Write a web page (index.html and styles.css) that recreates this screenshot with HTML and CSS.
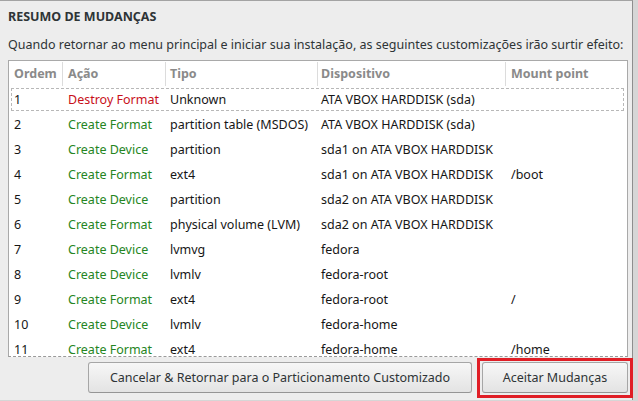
FILE: index.html
```html
<!DOCTYPE html>
<html lang="pt">
<head>
<meta charset="utf-8">
<link rel="stylesheet" href="styles.css">
</head>
<body>
<div class="dialog">
  <div class="title">RESUMO DE MUDANÇAS</div>
  <div class="subtitle">Quando retornar ao menu principal e iniciar sua instalação, as seguintes customizações irão surtir efeito:</div>
  <div class="table">
    <div class="row head">
      <div class="c c1">Ordem</div>
      <div class="c c2">Ação</div>
      <div class="c c3">Tipo</div>
      <div class="c c4">Dispositivo</div>
      <div class="c c5">Mount point</div>
    </div>
    <div class="body">
      <div class="row focus">
        <div class="c c1">1</div><div class="c c2 red">Destroy Format</div><div class="c c3">Unknown</div><div class="c c4">ATA VBOX HARDDISK (sda)</div><div class="c c5"></div>
      </div>
      <div class="row">
        <div class="c c1">2</div><div class="c c2 green">Create Format</div><div class="c c3">partition table (MSDOS)</div><div class="c c4">ATA VBOX HARDDISK (sda)</div><div class="c c5"></div>
      </div>
      <div class="row">
        <div class="c c1">3</div><div class="c c2 green">Create Device</div><div class="c c3">partition</div><div class="c c4">sda1 on ATA VBOX HARDDISK</div><div class="c c5"></div>
      </div>
      <div class="row">
        <div class="c c1">4</div><div class="c c2 green">Create Format</div><div class="c c3">ext4</div><div class="c c4">sda1 on ATA VBOX HARDDISK</div><div class="c c5">/boot</div>
      </div>
      <div class="row">
        <div class="c c1">5</div><div class="c c2 green">Create Device</div><div class="c c3">partition</div><div class="c c4">sda2 on ATA VBOX HARDDISK</div><div class="c c5"></div>
      </div>
      <div class="row">
        <div class="c c1">6</div><div class="c c2 green">Create Format</div><div class="c c3">physical volume (LVM)</div><div class="c c4">sda2 on ATA VBOX HARDDISK</div><div class="c c5"></div>
      </div>
      <div class="row">
        <div class="c c1">7</div><div class="c c2 green">Create Device</div><div class="c c3">lvmvg</div><div class="c c4">fedora</div><div class="c c5"></div>
      </div>
      <div class="row">
        <div class="c c1">8</div><div class="c c2 green">Create Device</div><div class="c c3">lvmlv</div><div class="c c4">fedora-root</div><div class="c c5"></div>
      </div>
      <div class="row">
        <div class="c c1">9</div><div class="c c2 green">Create Format</div><div class="c c3">ext4</div><div class="c c4">fedora-root</div><div class="c c5">/</div>
      </div>
      <div class="row">
        <div class="c c1">10</div><div class="c c2 green">Create Device</div><div class="c c3">lvmlv</div><div class="c c4">fedora-home</div><div class="c c5"></div>
      </div>
      <div class="row">
        <div class="c c1">11</div><div class="c c2 green">Create Format</div><div class="c c3">ext4</div><div class="c c4">fedora-home</div><div class="c c5">/home</div>
      </div>
    </div>
  </div>
  <div class="buttons">
    <button class="btn cancel">Cancelar &amp; Retornar para o Particionamento Customizado</button>
    <div class="highlight"><button class="btn accept">Aceitar Mudanças</button></div>
  </div>
</div>
</body>
</html>
```
FILE: styles.css
```css
html, body {
  margin: 0;
  padding: 0;
  height: 100%;
}
body {
  background: #d6d6d6;
  font-family: "Noto Sans", "DejaVu Sans", sans-serif;
  font-size: 12.5px;
  color: #161616;
  overflow: hidden;
}
.dialog {
  width: 633px;
  height: 400px;
  box-sizing: border-box;
  background: #ededed;
  border-top: 1px solid #a3a3a3;
  border-right: 1px solid #8e8e8e;
  padding: 8px 0 0 8px;
}
.title {
  font-weight: bold;
  line-height: 16px;
  color: #2e3436;
}
.subtitle {
  margin-top: 12px;
  line-height: 16px;
  color: #2e3436;
  white-space: nowrap;
}
.table {
  margin-top: 7px;
  width: 620px;
  height: 297px;
  box-sizing: border-box;
  background: #ffffff;
  border: 1px solid #a9a9a9;
  border-bottom: 1px dashed #9a9a9a;
  overflow: hidden;
  display: flex;
  flex-direction: column;
}
.row {
  display: grid;
  grid-template-columns: 54px 103px 152px 188px 1fr;
  height: 25px;
  align-items: center;
  position: relative;
  flex: none;
}
.row.head {
  height: 26px;
  color: #8a8a8a;
  font-weight: bold;
}
.row.head .c {
  height: 24px;
  line-height: 24px;
  border-right: 1px solid #dcdcdc;
  box-sizing: border-box;
}
.row.head .c5 { border-right: none; }
.c {
  white-space: nowrap;
  overflow: hidden;
  padding-left: 5px;
}
.c3 { padding-left: 4px; }
.c4 { padding-left: 3px; }
.c5 { padding-left: 5px; }
.row.focus::after {
  content: "";
  position: absolute;
  left: 2px;
  right: 3px;
  top: 1px;
  bottom: 1px;
  border: 1px dashed #b8b8b8;
  pointer-events: none;
}
.red { color: #c8101a; }
.green { color: #258522; }
.buttons {
  display: flex;
  justify-content: flex-end;
  gap: 10px;
  margin-top: 5px;
  padding-right: 4px;
}
.btn {
  font-family: "Noto Sans", "DejaVu Sans", sans-serif;
  font-size: 12.5px;
  color: #2e3436;
  height: 31px;
  border: 1px solid #a6a6a6;
  border-bottom-color: #959595;
  border-radius: 3px;
  background: linear-gradient(#f7f7f7, #e3e3e3);
  padding: 0 10px;
  margin: 0;
  display: block;
}
.cancel { width: 384px; }
.accept { width: 146px; }
.highlight {
  position: relative;
}
.highlight::after {
  content: "";
  position: absolute;
  left: -5px;
  right: -5px;
  top: -4px;
  bottom: -5px;
  border: 3px solid #e01e26;
  pointer-events: none;
}
```
